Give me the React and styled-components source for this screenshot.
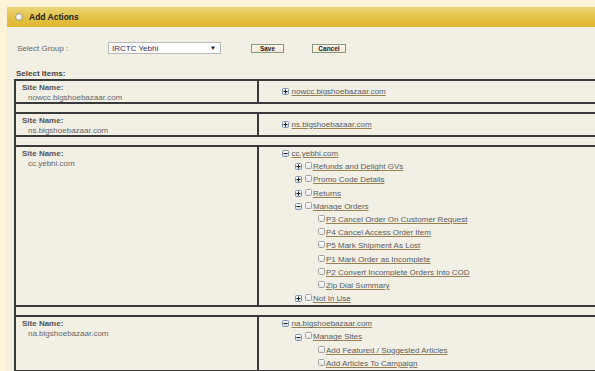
import React from 'react';
import styled, { createGlobalStyle } from 'styled-components';

const sites = [
  {
    name: 'nowcc.bigshoebazaar.com',
    tree: [{ label: 'nowcc.bigshoebazaar.com', open: false }],
  },
  {
    name: 'ns.bigshoebazaar.com',
    tree: [{ label: 'ns.bigshoebazaar.com', open: false }],
  },
  {
    name: 'cc.yebhi.com',
    tree: [
      {
        label: 'cc.yebhi.com',
        open: true,
        children: [
          { label: 'Refunds and Delight GVs', open: false, children: [] },
          { label: 'Promo Code Details', open: false, children: [] },
          { label: 'Returns', open: false, children: [] },
          {
            label: 'Manage Orders',
            open: true,
            children: [
              { label: 'P3 Cancel Order On Customer Request' },
              { label: 'P4 Cancel Access Order Item' },
              { label: 'P5 Mark Shipment As Lost' },
              { label: 'P1 Mark Order as Incomplete' },
              { label: 'P2 Convert Incomplete Orders Into COD' },
              { label: 'Zip Dial Summary' },
            ],
          },
          { label: 'Not In Use', open: false, children: [] },
        ],
      },
    ],
  },
  {
    name: 'na.bigshoebazaar.com',
    tree: [
      {
        label: 'na.bigshoebazaar.com',
        open: true,
        children: [
          {
            label: 'Manage Sites',
            open: true,
            children: [
              { label: 'Add Featured / Suggested Articles' },
              { label: 'Add Articles To Campaign' },
            ],
          },
        ],
      },
    ],
  },
];

function Expander({ open }) {
  return (
    <IconBox width="7" height="7" viewBox="0 0 7 7">
      <defs>
        <linearGradient id="exg" x1="0" y1="0" x2="0" y2="1">
          <stop offset="0" stopColor="#ffffff" />
          <stop offset="1" stopColor="#cfd8e4" />
        </linearGradient>
      </defs>
      <rect x="0.5" y="0.5" width="6" height="6" rx="1" fill="url(#exg)" stroke="#7f93ad" />
      <line x1="1.5" y1="3.5" x2="5.5" y2="3.5" stroke="#1d1d1d" />
      {!open && <line x1="3.5" y1="1.5" x2="3.5" y2="5.5" stroke="#1d1d1d" />}
    </IconBox>
  );
}

function TreeNode({ node, level }) {
  const hasKids = node.children !== undefined || level === 0;
  return (
    <>
      <Item $level={level}>
        {hasKids ? <Expander open={node.open} /> : <Blank />}
        {level > 0 && <Check />}
        <Link>{node.label}</Link>
      </Item>
      {node.open &&
        node.children &&
        node.children.map((c) => <TreeNode key={c.label} node={c} level={level + 1} />)}
    </>
  );
}

export default function App() {
  return (
    <>
      <GlobalStyle />
      <Page>
        <Panel>
          <Header>
            <Radio />
            <Title>Add Actions</Title>
          </Header>
          <Body>
            <FormRow>
              <Label>Select Group :</Label>
              <Select>
                <span>IRCTC Yebhi</span>
                <Arrow>▼</Arrow>
              </Select>
              <Button $ml={30} $w={33}>Save</Button>
              <Button $ml={28} $w={34}>Cancel</Button>
            </FormRow>
            <SectionTitle>Select Items:</SectionTitle>
            <Table>
              <tbody>
                {sites.map((s, i) => (
                  <React.Fragment key={s.name}>
                    {i > 0 && (
                      <tr>
                        <SpacerCell colSpan={2} />
                      </tr>
                    )}
                    <tr>
                      <NameCell>
                        <NameLabel>Site Name:</NameLabel>
                        <NameValue>{s.name}</NameValue>
                      </NameCell>
                      <TreeCell>
                        {s.tree.map((n) => (
                          <TreeNode key={n.label} node={n} level={0} />
                        ))}
                      </TreeCell>
                    </tr>
                  </React.Fragment>
                ))}
              </tbody>
            </Table>
          </Body>
        </Panel>
      </Page>
    </>
  );
}

const GlobalStyle = createGlobalStyle`
html, body {
  margin: 0;
  overflow: hidden;
  background: #fcf3d8;
  font-family: "Liberation Sans", Arial, sans-serif;
}
`
const Page = styled.div`
padding: 7px 0 0 7px;
border-top: 1px solid #f3e4b6;
margin-top: -1px;
`
const Panel = styled.div`
width: 720px;
min-height: 400px;
background: #f2efe5;
`
const Header = styled.div`
height: 20px;
display: flex;
align-items: center;
padding-left: 8px;
background: linear-gradient(#ead47c 0%, #e5c44c 45%, #dfb52c 100%);
`
const Radio = styled.span`
width: 8px;
height: 8px;
border-radius: 50%;
box-sizing: border-box;
border: 1px solid #a5a08a;
background: radial-gradient(circle at 45% 40%, #ffffff 0%, #ecebe4 55%, #c9c5b4 100%);
margin-right: 6px;
`
const Title = styled.span`
font-size: 8.5px;
font-weight: bold;
color: #1e1e1e;
`
const Body = styled.div`
padding: 0 7px;
`
const FormRow = styled.div`
display: flex;
align-items: center;
height: 12px;
margin-top: 15px;
`
const Label = styled.span`
width: 94px;
padding-left: 3px;
box-sizing: border-box;
font-size: 8px;
color: #666;
`
const Select = styled.div`
width: 113px;
height: 12px;
box-sizing: border-box;
border: 1px solid #b9b9b9;
background: #fff;
display: flex;
align-items: center;
justify-content: space-between;
padding: 0 4px 0 3px;
font-size: 8px;
color: #3b2a55;
`
const Arrow = styled.span`
font-size: 6px;
color: #111;
`
const Button = styled.div`
margin-left: ${(p) => p.$ml}px;
width: ${(p) => p.$w}px;
height: 9px;
box-sizing: border-box;
border: 1px solid #879a7c;
background: linear-gradient(#fffaf2, #f6e6d6);
display: flex;
align-items: center;
justify-content: center;
font-size: 6.5px;
font-weight: bold;
color: #222;
`
const SectionTitle = styled.div`
margin-top: 15px;
padding-left: 2px;
line-height: 10px;
font-size: 8px;
font-weight: bold;
color: #444;
`
const Table = styled.table`
width: 700px;
border-collapse: collapse;
td {
  border: 2px solid #3a3a3a;
  padding: 0;
}
`
const SpacerCell = styled.td`
height: 8px;
`
const NameCell = styled.td`
width: 241px;
vertical-align: top;
padding-top: 2px !important;
height: 19px;
`
const NameLabel = styled.div`
padding-left: 6px;
line-height: 9.5px;
font-size: 8px;
font-weight: bold;
color: #555;
`
const NameValue = styled.div`
padding-left: 12px;
line-height: 9.5px;
font-size: 8px;
color: #666;
`
const TreeCell = styled.td`
vertical-align: middle;
padding-left: 23px !important;
`
const Item = styled.div`
display: flex;
align-items: center;
height: 13.2px;
padding-left: ${(p) => p.$level * 13}px;
`
const IconBox = styled.svg`
flex: none;
margin-right: 2.5px;
`
const Blank = styled.span`
width: 7px;
margin-right: 2.5px;
flex: none;
`
const Check = styled.span`
flex: none;
align-self: flex-start;
margin-top: 2px;
width: 7px;
height: 7px;
box-sizing: border-box;
border: 1px solid #a3a3a3;
border-radius: 1.5px;
background: linear-gradient(#ffffff, #e4e4e4);
margin-left: 0.5px;
margin-right: 1px;
`
const Link = styled.span`
font-size: 8px;
line-height: 13.2px;
color: #5c5c5c;
text-decoration: underline;
text-decoration-color: #9a8053;
white-space: nowrap;
`
